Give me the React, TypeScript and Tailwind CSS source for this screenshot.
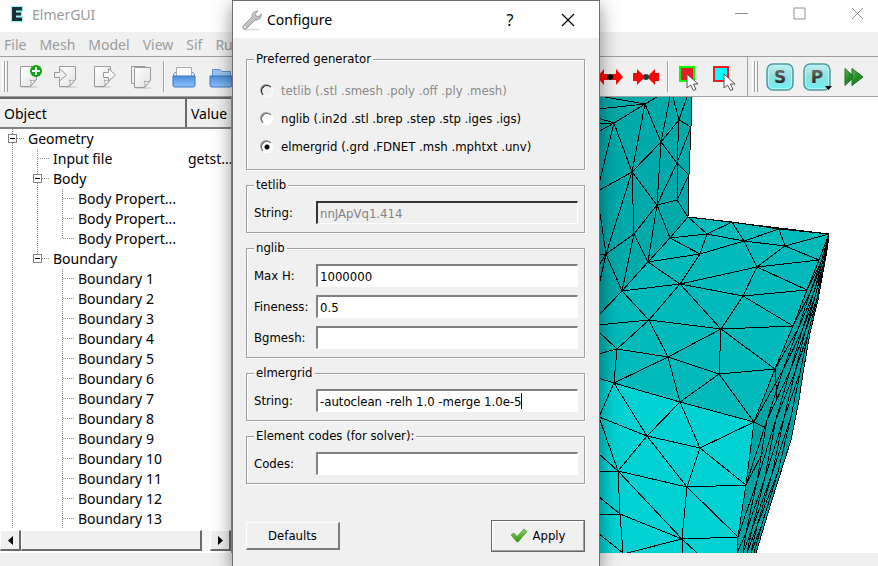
import type { ReactNode } from "react";

/* ---------- Tree ---------- */

type Guide = "line" | "tee" | "corner" | "blank" | "box" | "boxLast";

type TreeRow = { guides: Guide[]; label: string; value?: string };

const rows: TreeRow[] = [
  { guides: ["box"], label: "Geometry" },
  { guides: ["line", "tee"], label: "Input file", value: "getst..." },
  { guides: ["line", "box"], label: "Body" },
  { guides: ["line", "line", "tee"], label: "Body Propert..." },
  { guides: ["line", "line", "tee"], label: "Body Propert..." },
  { guides: ["line", "line", "corner"], label: "Body Propert..." },
  { guides: ["line", "boxLast"], label: "Boundary" },
  ...Array.from({ length: 13 }, (_, i): TreeRow => ({
    guides: ["line", "blank", "tee"],
    label: `Boundary ${i + 1}`,
  })),
];

function GuideCell({ kind }: { kind: Guide }) {
  const isBox = kind === "box" || kind === "boxLast";
  const half = kind === "corner" || kind === "boxLast";
  return (
    <svg width="25" height="20" viewBox="0 0 25 20" shapeRendering="crispEdges" className="shrink-0" aria-hidden="true">
      <g stroke="#8c8c8c" strokeDasharray="1 1" fill="none">
        {kind !== "blank" && <path d={half ? "M12.5 0V10" : "M12.5 0V20"} />}
        {kind !== "blank" && kind !== "line" && <path d="M13 9.5H24" />}
      </g>
      {isBox && (
        <>
          <rect x="8.5" y="5.5" width="8" height="8" fill="#fff" stroke="#808080" />
          <path d="M10 9.5H15" stroke="#000" />
        </>
      )}
    </svg>
  );
}

function ObjectTree() {
  return (
    <aside className="flex w-[232px] shrink-0 flex-col overflow-hidden border-r border-[#a0a0a0] bg-white">
      <div className="min-h-0 flex-1 overflow-hidden">
        <table className="w-full table-fixed border-collapse text-left text-[14px] text-black">
          <colgroup>
            <col className="w-[186px]" />
            <col />
          </colgroup>
          <thead>
            <tr className="h-[30px] bg-[#f0f0f0]">
              <th className="border-t-2 border-r-2 border-b-2 border-t-[#6a6a6a] border-r-[#6a6a6a] border-b-[#808080] p-0 pl-1 font-normal">
                Object
              </th>
              <th className="border-t-2 border-b-2 border-t-[#6a6a6a] border-b-[#808080] p-0 pl-1 font-normal whitespace-nowrap">
                Value .
              </th>
            </tr>
          </thead>
          <tbody>
            {rows.map((row, i) => (
              <tr key={i} className="h-5">
                <td className="p-0">
                  <div className="flex h-5 items-center whitespace-nowrap">
                    {row.guides.map((g, k) => (
                      <GuideCell key={k} kind={g} />
                    ))}
                    <span className="pl-[3px] leading-5">{row.label}</span>
                  </div>
                </td>
                <td className="p-0 pl-0.5 leading-5 whitespace-nowrap">{row.value}</td>
              </tr>
            ))}
          </tbody>
        </table>
      </div>
      <div className="flex h-[21px] shrink-0 bg-[#f7f7f7]">
        <ScrollButton label="Scroll left" path="M7 9.5L12 5V14Z" />
        <div className="mr-2 flex-1 border-t border-r-2 border-b-2 border-l border-t-white border-r-[#6a6a6a] border-b-[#6a6a6a] border-l-white bg-[#f0f0f0]" />
        <ScrollButton label="Scroll right" path="M12 9.5L7 5V14Z" />
      </div>
      <div className="h-0.5 shrink-0 bg-white" />
    </aside>
  );
}

function ScrollButton({ label, path }: { label: string; path: string }) {
  return (
    <button
      type="button"
      aria-label={label}
      className="w-[21px] shrink-0 border-t border-r-2 border-b-2 border-l border-t-white border-r-[#6a6a6a] border-b-[#6a6a6a] border-l-white bg-[#f0f0f0]"
    >
      <svg width="18" height="18" viewBox="0 0 18 18" aria-hidden="true">
        <path d={path} fill="#000" />
      </svg>
    </button>
  );
}

/* ---------- Mesh view ---------- */

const P: Record<string, [number, number]> = {
  A: [645, 104], B: [691, 127], B2: [689, 175], C: [614, 123], D: [661, 142], E: [679, 120],
  F: [677, 163], G: [632, 172], H: [657, 205], I: [677, 200], J: [688, 217], K: [670, 238],
  L: [634, 234], M: [606, 254], N: [707, 234], O: [732, 222], Pp: [744, 241], Q: [779, 229],
  R: [785, 246], S: [829, 234], T: [700, 254], U: [648, 262], V: [622, 291], W: [680, 284],
  X: [757, 267], a: [819, 260], b: [807, 290], c: [743, 296], d: [793, 326], e: [649, 320],
  f: [721, 329], g: [617, 349], h: [668, 357], i: [719, 374], j: [775, 369], k: [614, 383],
  l: [680, 402], m: [754, 422], n: [647, 436], o: [700, 448], p: [746, 485], q: [618, 471],
  r: [687, 487], s: [682, 539], t: [738, 537], u: [620, 514], v: [599, 417], w: [623, 553],
};

const links =
  "A-G A-D A-C C-G D-E D-G D-F D-H E-B E-F F-B F-B2 F-H F-I I-B2 H-I I-J H-K H-G H-L G-L G-M L-M L-U L-V H-U K-U K-J K-N K-T M-V " +
  "N-J N-O N-T N-Pp O-Pp J-O O-Q Q-S Pp-Q Pp-R Pp-T Pp-X Q-R R-S R-X R-a T-U T-W T-Pp U-W U-V V-W W-X W-c W-e W-f X-a X-b X-c c-b c-d c-f " +
  "f-d f-e f-j f-i f-h V-e e-g e-h g-h g-k h-k h-i h-l i-j i-l i-m k-l k-v k-n l-n l-o l-m v-n v-q n-q n-o n-r o-m o-p o-r q-r q-s q-u " +
  "r-p r-s r-t u-s u-w s-t S-a a-b b-d d-j j-m m-p p-t";

const linkPath = links
  .split(" ")
  .map((pair) => {
    const [from, to] = pair.split("-");
    return `M${P[from].join(" ")}L${P[to].join(" ")}`;
  })
  .join("");

const edgePath =
  "M645 104L605 97M645 104L598 109M645 104L657 97M614 123L598 118M614 123L598 124M614 123L598 132M614 123L598 188M632 172L598 191" +
  "M661 142L670 97M679 120L673 97M679 120L687 97M606 254L598 200M606 254L598 254M606 254L598 267M606 254L598 290M622 291L598 316" +
  "M649 320L598 325M617 349L598 331M617 349L598 354M614 383L598 378M618 471L598 453M618 471H598M620 514L598 496M620 514L598 515" +
  "M623 553L598 533M682 539L627 553M682 539V553M682 539L697 553M738 537L737 553";

/* Side face: the left and right borders of the narrow strip at matching heights. */
const sideLeft: [number, number][] = [[829, 234], [819, 260], [807, 290], [793, 326], [775, 369], [754, 422], [746, 485], [738, 537], [737, 553]];
const sideRight: [number, number][] = [[829, 238], [824, 268], [818, 300], [810, 335], [803, 373], [796, 416], [782, 470], [765, 522], [756, 553]];

function mix(i: number, t: number) {
  const [x1, y1] = sideLeft[i];
  const [x2, y2] = sideRight[i];
  return `${Math.round(x1 + (x2 - x1) * t)} ${Math.round(y1 + (y2 - y1) * t)}`;
}

const fractions = [0, 0.3, 0.52, 0.72, 0.88];
const sidePath =
  fractions.map((t) => "M" + sideLeft.map((_, i) => mix(i, t)).join("L")).join("") +
  fractions
    .slice(1)
    .map((t, k) =>
      sideLeft
        .slice(2)
        .map((_, i) => `M${mix(i + 1, t)}L${mix(i + 2, fractions[k])}`)
        .join("")
    )
    .join("") +
  "M775 369L777 400M754 422L764 427M746 485L764 450";

function MeshView() {
  return (
    <main className="min-w-0 flex-1 overflow-hidden bg-white pl-[366px]">
      <svg width="280" height="456" viewBox="598 97 280 456" shapeRendering="crispEdges" role="img" aria-label="Finite element mesh">
        <path d="M598 97H692L688 217L670 238L648 262L622 291L598 316Z" fill="#00a9aa" />
        <path d="M688 217L829 234L819 260L793 326L754 422L680 402L614 383L598 378V316L622 291L648 262L670 238Z" fill="#00b9bb" />
        <path d="M598 378L614 383L680 402L754 422L746 485L738 537L737 553H598Z" fill="#00d2d3" />
        <path
          d="M829 234L819 260L807 290L793 326L775 369L754 422L746 485L738 537L737 553H756L771 503L791 440L799 400L803 373L810 333L818 300Z"
          fill="#00a3a4"
        />
        <g fill="none" stroke="#000" strokeWidth="1">
          <path d={linkPath} />
          <path d={edgePath} />
          <path d={sidePath} />
          <path d="M692 97L691 127L689 175L688 217L829 234L827 250L818 300L810 333L803 373L799 400L791 440L771 503L756 553" />
        </g>
      </svg>
    </main>
  );
}

/* ---------- Toolbar ---------- */

function ToolButton({ label, children }: { label: string; children: ReactNode }) {
  return (
    <button type="button" aria-label={label} className="flex w-[37px] shrink-0 items-center justify-center">
      {children}
    </button>
  );
}

function Icon({ children, size = 28 }: { children: ReactNode; size?: number }) {
  return (
    <svg width={size} height={size} viewBox={`0 0 ${size} ${size}`} aria-hidden="true" className="shrink-0">
      {children}
    </svg>
  );
}

const page = "M4.5 3.5H20.5V16.5L14.5 23.5H4.5Z";

function Page() {
  return (
    <>
      <ellipse cx="13" cy="24" rx="9" ry="1" fill="#d4d4d4" />
      <path d={page} fill="url(#paper)" stroke="#999" />
      <path d="M14.5 23C16 20 15 18 14 17C17 18.500 19 17.500 20.500 16.500Z" fill="#fff" stroke="#999" strokeWidth="0.8" />
    </>
  );
}

function Handle() {
  return (
    <div className="flex w-[6px] shrink-0 justify-between py-1">
      <span className="w-[3px] border-r border-l border-r-[#a0a0a0] border-l-white" />
      <span className="w-[3px] border-r border-l border-r-[#a0a0a0] border-l-white" />
    </div>
  );
}

function Separator() {
  return <span className="my-1 w-0.5 shrink-0 border-r border-l border-r-white border-l-[#a0a0a0]" />;
}

function Arrows({ inward }: { inward?: boolean }) {
  return (
    <Icon>
      <g fill="#fa0505">
        {inward ? (
          <>
            <path d="M0 10H4V6L12 14L4 22V18H0Z" />
            <path d="M26 10H22V6L14 14L22 22V18H26Z" />
          </>
        ) : (
          <>
            <path d="M1 14L8 6V11H12V17H8V22Z" />
            <path d="M27 14L20 6V11H16V17H20V22Z" />
          </>
        )}
      </g>
      <circle cx={inward ? 13 : 14} cy="14" r="3" fill={inward ? "#333" : "#000"} />
    </Icon>
  );
}

function Pointer() {
  return <path d="M13 11V25L16.500 22L19.500 27.500L22 26.500L19.500 21H24Z" fill="#fff" stroke="#555" strokeWidth="1" />;
}

function Tile({ letter, menu }: { letter: string; menu?: boolean }) {
  return (
    <Icon size={32}>
      <rect x="3" y="3" width="26" height="26" rx="6" fill="url(#tile)" stroke="#4d9da0" strokeWidth="1.500" />
      <rect x="4.500" y="4.500" width="23" height="23" rx="5" fill="none" stroke="#b5f5f5" />
      <text x="16" y="22" textAnchor="middle" fontFamily="DejaVu Sans" fontWeight="700" fontSize="17" fill="url(#ink)">
        {letter}
      </text>
      {menu && <path d="M24 25H31L27.500 29Z" fill="#000" />}
    </Icon>
  );
}

function Toolbar() {
  return (
    <div className="flex h-[41px] shrink-0 overflow-hidden border-t border-b border-[#a0a0a0] bg-[#f0f0f0]">
      <div className="flex w-[591px] shrink-0 pl-0.5">
        <Handle />
        <div className="flex pl-[3px]">
          <ToolButton label="New">
            <Icon>
              <Page />
              <circle cx="20" cy="8" r="6" fill="#12a312" />
              <path d="M20 4V12M16 8H24" stroke="#fff" strokeWidth="2" />
            </Icon>
          </ToolButton>
          <ToolButton label="Open">
            <Icon>
              <g transform="translate(2 0)">
                <Page />
              </g>
              <path d="M1.500 9.500H6.500V5.500L13.500 12L6.500 18V14.500H1.500Z" fill="#f2f2f2" stroke="#999" />
            </Icon>
          </ToolButton>
          <ToolButton label="Save">
            <Icon>
              <Page />
              <path d="M13.500 9.500H18.500V5.500L25.500 12L18.500 18V14.500H13.500Z" fill="#fafafa" stroke="#999" />
            </Icon>
          </ToolButton>
          <ToolButton label="Save as">
            <Icon>
              <path d="M4.500 3.500H18.500V20.500H4.500Z" fill="#f4f4f4" stroke="#999" />
              <g transform="translate(3 1)">
                <Page />
              </g>
            </Icon>
          </ToolButton>
        </div>
        <div className="flex pl-1">
          <Separator />
          <ToolButton label="Open project">
            <Icon>
              <path d="M6.500 4.500H21.500V14H6.500Z" fill="#fafafa" stroke="#aaa" />
              <path d="M3.500 14V11L6 9M24.500 14V11L22 9" stroke="#5d8fcc" fill="none" />
              <path d="M3 13H25V22Q25 24 23 24H5Q3 24 3 22Z" fill="url(#folder)" stroke="#3a78c4" />
            </Icon>
          </ToolButton>
          <ToolButton label="Save project">
            <Icon>
              <path d="M5.500 14V6.500H13L15 8.500H23.500V14Z" fill="#9cc3f0" stroke="#5d8fcc" />
              <path d="M3 13H25V22Q25 24 23 24H5Q3 24 3 22Z" fill="url(#folder)" stroke="#3a78c4" />
            </Icon>
          </ToolButton>
        </div>
      </div>
      <div className="flex shrink-0 pr-1">
        <div className="flex w-[76px] shrink-0">
          <ToolButton label="Expand">
            <Arrows />
          </ToolButton>
          <ToolButton label="Shrink">
            <Arrows inward />
          </ToolButton>
        </div>
        <Separator />
        <ToolButton label="Select surfaces">
          <Icon>
            <rect x="6" y="4" width="14" height="14" fill="#ed1c24" stroke="#0f0" strokeWidth="2" />
            <Pointer />
          </Icon>
        </ToolButton>
        <ToolButton label="Select edges">
          <Icon>
            <rect x="3" y="4" width="14" height="14" fill="#0ff" stroke="#ed1c24" strokeWidth="2" />
            <Pointer />
          </Icon>
        </ToolButton>
      </div>
      <div className="flex shrink-0 border-l border-[#a0a0a0] pl-1">
        <Handle />
        <div className="flex pl-[3px]">
          <ToolButton label="Generate sif">
            <Tile letter="S" />
          </ToolButton>
          <ToolButton label="Postprocess">
            <Tile letter="P" menu />
          </ToolButton>
          <ToolButton label="Run">
            <Icon>
              <path d="M5 5.500L14 14L5 22.500Z" fill="url(#play)" stroke="#1d6b1d" />
              <path d="M12 5.500L23 14L12 22.500Z" fill="url(#play)" stroke="#1d6b1d" />
            </Icon>
          </ToolButton>
        </div>
      </div>
    </div>
  );
}

function Gradients() {
  return (
    <svg width="0" height="0" className="absolute" aria-hidden="true">
      <defs>
        <linearGradient id="paper" x1="0" y1="0" x2="1" y2="1">
          <stop offset="0" stopColor="#fff" />
          <stop offset="1" stopColor="#e2e2e2" />
        </linearGradient>
        <linearGradient id="folder" x1="0" y1="0" x2="0" y2="1">
          <stop offset="0" stopColor="#4d8fdc" />
          <stop offset="1" stopColor="#8fc0f8" />
        </linearGradient>
        <linearGradient id="tile" x1="0" y1="0" x2="0" y2="1">
          <stop offset="0" stopColor="#c6f0f0" />
          <stop offset="0.5" stopColor="#8fdedf" />
          <stop offset="1" stopColor="#6ff0f2" />
        </linearGradient>
        <linearGradient id="ink" x1="0" y1="0" x2="0" y2="1">
          <stop offset="0" stopColor="#777" />
          <stop offset="1" stopColor="#111" />
        </linearGradient>
        <linearGradient id="play" x1="0" y1="0" x2="1" y2="1">
          <stop offset="0" stopColor="#6fb56f" />
          <stop offset="0.5" stopColor="#1f8a1f" />
          <stop offset="1" stopColor="#18c018" />
        </linearGradient>
        <linearGradient id="steel" x1="0" y1="0" x2="1" y2="1">
          <stop offset="0" stopColor="#e8e8e8" />
          <stop offset="1" stopColor="#9a9a9a" />
        </linearGradient>
        <linearGradient id="tick" x1="0" y1="0" x2="0" y2="1">
          <stop offset="0" stopColor="#8fd16a" />
          <stop offset="1" stopColor="#2f9410" />
        </linearGradient>
      </defs>
    </svg>
  );
}

/* ---------- Dialog ---------- */

function Group({ title, children }: { title: string; children: ReactNode }) {
  return (
    <fieldset className="min-w-0 border border-[#a0a0a0] pr-1.5 pb-2 pl-[7px] shadow-[1px_1px_0_#fff,inset_1px_1px_0_#fff]">
      <legend className="bg-[#f0f0f0] px-0.5 leading-4">{title}</legend>
      {children}
    </fieldset>
  );
}

function Field({ id, label, value = "", disabled, caret }: { id: string; label: string; value?: string; disabled?: boolean; caret?: boolean }) {
  return (
    <div className="flex items-center">
      <label htmlFor={id} className="w-[62px] shrink-0">
        {label}
      </label>
      <div className="relative flex min-w-0 flex-1">
        <input
          id={id}
          type="text"
          defaultValue={value}
          disabled={disabled}
          className="h-[23px] w-full min-w-0 border-t-2 border-r border-b border-l-2 border-t-[#808080] border-r-white border-b-white border-l-[#808080] bg-white px-0.5 text-black outline-none disabled:border-t-[#333] disabled:border-l-[#333] disabled:bg-[#f0f0f0] disabled:text-[#838383]"
        />
        {caret && <span className="absolute top-1 left-[205px] h-4 w-px bg-black" />}
      </div>
    </div>
  );
}

function Radio({ id, label, checked, disabled }: { id: string; label: string; checked?: boolean; disabled?: boolean }) {
  return (
    <div className="flex h-7 items-center gap-2 pl-[7px]">
      <input
        id={id}
        type="radio"
        name="generator"
        defaultChecked={checked}
        disabled={disabled}
        className="size-3 shrink-0 appearance-none rounded-full border border-t-[#696969] border-r-white border-b-white border-l-[#696969] bg-white shadow-[-1px_-1px_0_#a0a0a0] checked:bg-[radial-gradient(circle,#000_2px,#fff_3px)] disabled:border-t-[#222] disabled:border-l-[#222] disabled:bg-[#f0f0f0]"
      />
      <label htmlFor={id} className={disabled ? "text-[#8a8a8a]" : "text-black"}>
        {label}
      </label>
    </div>
  );
}

function ConfigureDialog() {
  return (
    <section
      role="dialog"
      aria-labelledby="dialog-title"
      className="absolute top-0 bottom-0 left-[232px] w-[368px] overflow-hidden border-t border-r border-l border-[#6e6e6e] bg-[#f0f0f0] font-['DejaVu_Sans_Condensed','DejaVu_Sans',sans-serif] text-[13px] text-black shadow-[0_6px_18px_rgba(0,0,0,0.45)]"
    >
      <header className="flex h-[37px] items-center bg-white pr-6 pl-2 font-['Noto_Sans',sans-serif] text-[14px]">
        <svg width="22" height="22" viewBox="0 0 22 22" aria-hidden="true">
          <ellipse cx="10" cy="20.500" rx="9" ry="1" fill="#ddd" />
          <path
            d="M2 17L11 8C10.500 4.500 13 2 17 2L14.500 4.500L15 7L17.500 7.500L20.500 5C20.500 9 17.500 11.500 14 11L5 20C3 21 1 19 2 17Z"
            fill="url(#steel)"
            stroke="#8e8e8e"
            strokeWidth="0.8"
          />
          <circle cx="3.800" cy="18.200" r="0.900" fill="#fff" />
        </svg>
        <h1 id="dialog-title" className="flex-1 pl-1">
          Configure
        </h1>
        <div className="flex gap-11">
          <button type="button" aria-label="Help" className="w-3.5 text-[16px]">
            ?
          </button>
          <button type="button" aria-label="Close dialog">
            <svg width="14" height="14" viewBox="0 0 14 14" aria-hidden="true">
              <path d="M1 1L13 13M13 1L1 13" stroke="#000" strokeWidth="1.200" />
            </svg>
          </button>
        </div>
      </header>
      <form className="flex flex-col gap-[7px] pt-[13px] pr-3.5 pl-[13px]" onSubmit={(e) => e.preventDefault()}>
        <Group title="Preferred generator">
          <div className="pt-2.5">
            <Radio id="g-tetlib" label="tetlib (.stl .smesh .poly .off .ply .mesh)" disabled />
            <Radio id="g-nglib" label="nglib (.in2d .stl .brep .step .stp .iges .igs)" />
            <Radio id="g-elmergrid" label="elmergrid (.grd .FDNET .msh .mphtxt .unv)" checked />
          </div>
        </Group>
        <Group title="tetlib">
          <div className="pt-2">
            <Field id="tetlib-string" label="String:" value="nnJApVq1.414" disabled />
          </div>
        </Group>
        <Group title="nglib">
          <div className="flex flex-col gap-2 pt-2">
            <Field id="max-h" label="Max H:" value="1000000" />
            <Field id="fineness" label="Fineness:" value="0.5" />
            <Field id="bgmesh" label="Bgmesh:" />
          </div>
        </Group>
        <Group title="elmergrid">
          <div className="pt-2">
            <Field id="elmergrid-string" label="String:" value="-autoclean -relh 1.0 -merge 1.0e-5" caret />
          </div>
        </Group>
        <Group title="Element codes (for solver):">
          <div className="pt-2">
            <Field id="codes" label="Codes:" />
          </div>
        </Group>
        <div className="flex items-center justify-between pt-[29px]">
          <button
            type="button"
            className="h-7 w-[94px] border-t border-r-2 border-b-2 border-l border-t-white border-r-[#7a7a7a] border-b-[#7a7a7a] border-l-white"
          >
            Defaults
          </button>
          <button type="submit" className="h-8 w-[94px] border border-[#696969]">
            <span className="flex h-full items-center justify-center gap-1 border-t border-r border-b border-l border-t-white border-r-[#a0a0a0] border-b-[#a0a0a0] border-l-white">
              <svg width="18" height="16" viewBox="0 0 18 16" aria-hidden="true">
                <path d="M1 7L4 5L7 8.500L14 1L17 3.500L8 14H7Z" fill="url(#tick)" stroke="#3f9a24" strokeWidth="0.700" />
              </svg>
              Apply
            </span>
          </button>
        </div>
      </form>
    </section>
  );
}

/* ---------- Main window ---------- */

export default function App() {
  return (
    <div className="relative flex h-screen flex-col overflow-hidden bg-[#f0f0f0] font-['Noto_Sans',sans-serif]">
      <Gradients />
      <header className="flex h-8 shrink-0 items-center bg-white pr-3.5 pl-2.5 text-[14px] text-[#999]">
        <svg width="14" height="18" viewBox="0 0 14 18" className="-mt-1" aria-hidden="true">
          <path d="M2 2H12V5.500H6V7.500H11V10.500H6V12.500H12V16H2Z" fill="#173038" stroke="#9ff0f0" strokeWidth="2.500" paintOrder="stroke" />
        </svg>
        <span className="flex-1 pb-1 pl-2">ElmerGUI</span>
        <div className="flex gap-[45px] pb-1.5">
          {[
            { label: "Minimize", d: "M0 6.500H13" },
            { label: "Maximize", d: "M1 1H12V12H1Z" },
            { label: "Close", d: "M1 1L12 12M12 1L1 12" },
          ].map((b) => (
            <button key={b.label} type="button" aria-label={b.label}>
              <svg width="13" height="13" viewBox="0 0 13 13" aria-hidden="true">
                <path d={b.d} fill="none" stroke="#8e8e8e" />
              </svg>
            </button>
          ))}
        </div>
      </header>
      <nav className="flex h-6 shrink-0 items-center gap-[13px] pl-1 text-[14px] text-[#9c9c9c]">
        {["File", "Mesh", "Model", "View", "Sif", "Run"].map((m) => (
          <button key={m} type="button">
            {m}
          </button>
        ))}
      </nav>
      <Toolbar />
      <div className="flex min-h-0 flex-1">
        <ObjectTree />
        <MeshView />
      </div>
      <footer className="h-[13px] shrink-0 bg-[#f0f0f0]" />
      <ConfigureDialog />
    </div>
  );
}
